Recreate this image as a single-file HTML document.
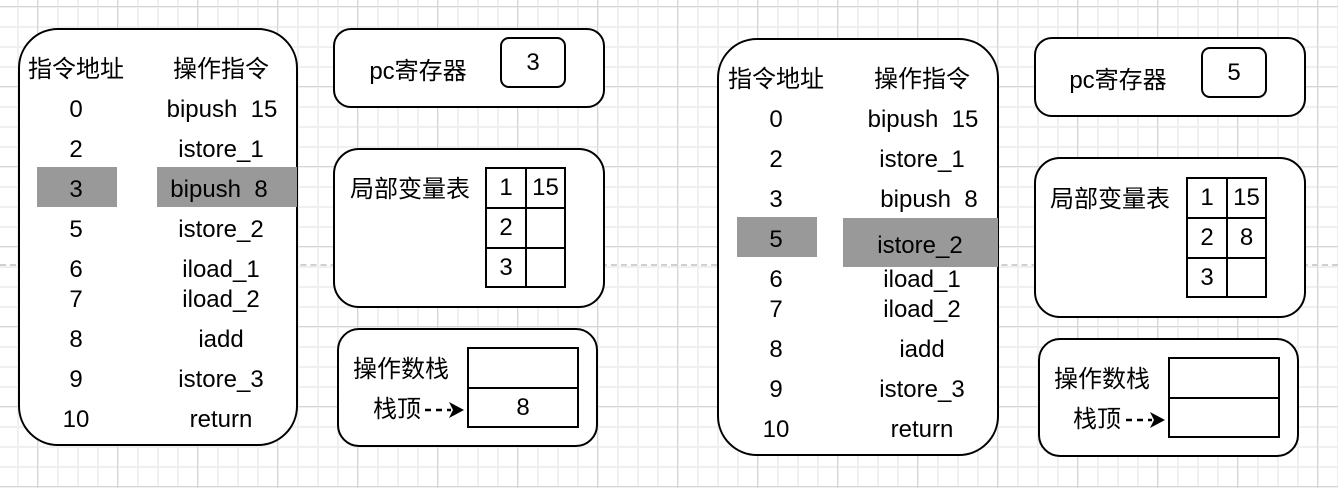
<!DOCTYPE html>
<html><head><meta charset="utf-8"><style>
body{margin:0;width:1338px;height:488px;overflow:hidden;background:#fff;
background-image:linear-gradient(#d6d6d6 1px,transparent 1px),linear-gradient(90deg,#d6d6d6 1px,transparent 1px),linear-gradient(#f0f0f0 2px,transparent 2px),linear-gradient(90deg,#f0f0f0 2px,transparent 2px);
background-size:80px 80px,80px 80px,20px 20px,20px 20px;background-position:0 6px,37px 0,0 6px,17px 0;position:relative;
font-family:"Liberation Sans","Noto Sans CJK SC",sans-serif;color:#000}
.a{position:absolute}
.box{position:absolute;border:2px solid #000;border-radius:26px;background:#fff;box-sizing:border-box}
.t{position:absolute;font-size:24px;line-height:28px;white-space:pre;transform:translate(-50%,-50%)}
.hl{position:absolute;background:#999}
.c{position:absolute;border:2px solid #000;box-sizing:border-box;font-size:24px;display:flex;align-items:center;justify-content:center}
.dash{position:absolute;left:0;top:264px;width:1338px;border-top:2px dashed #d0d0d0}
</style></head><body>
<div class="dash"></div>

<!-- LEFT -->
<div class="box" style="left:18px;top:28px;width:280px;height:418px;border-radius:40px"></div>
<div class="hl" style="left:37px;top:167px;width:80px;height:40px"></div>
<div class="hl" style="left:157px;top:167px;width:140px;height:40px"></div>
<div class="t" style="left:76px;top:70px">指令地址</div>
<div class="t" style="left:221px;top:70px">操作指令</div>
<div class="t" style="left:76px;top:110px">0</div><div class="t" style="left:222px;top:110px">bipush  15</div>
<div class="t" style="left:76px;top:150px">2</div><div class="t" style="left:221px;top:150px">istore_1</div>
<div class="t" style="left:76px;top:190px">3</div><div class="t" style="left:219px;top:190px">bipush  8</div>
<div class="t" style="left:76px;top:230px">5</div><div class="t" style="left:221px;top:230px">istore_2</div>
<div class="t" style="left:76px;top:270px">6</div><div class="t" style="left:221px;top:270px">iload_1</div>
<div class="t" style="left:76px;top:300px">7</div><div class="t" style="left:221px;top:300px">iload_2</div>
<div class="t" style="left:76px;top:340px">8</div><div class="t" style="left:221px;top:340px">iadd</div>
<div class="t" style="left:76px;top:380px">9</div><div class="t" style="left:221px;top:380px">istore_3</div>
<div class="t" style="left:76px;top:420px">10</div><div class="t" style="left:221px;top:420px">return</div>

<div class="box" style="left:333px;top:28px;width:272px;height:80px;border-radius:18px"></div>
<div class="t" style="left:418px;top:72px">pc寄存器</div>
<div class="c" style="left:500px;top:37px;width:66px;height:51px;border-radius:9px">3</div>

<div class="box" style="left:333px;top:148px;width:272px;height:160px"></div>
<div class="t" style="left:410px;top:190px">局部变量表</div>
<div class="c" style="left:485px;top:167px;width:42px;height:42px">1</div>
<div class="c" style="left:525px;top:167px;width:41px;height:42px">15</div>
<div class="c" style="left:485px;top:207px;width:42px;height:42px">2</div>
<div class="c" style="left:525px;top:207px;width:41px;height:42px"></div>
<div class="c" style="left:485px;top:247px;width:42px;height:41px">3</div>
<div class="c" style="left:525px;top:247px;width:41px;height:41px"></div>

<div class="box" style="left:337px;top:328px;width:261px;height:119px;border-radius:22px"></div>
<div class="t" style="left:401px;top:370px">操作数栈</div>
<div class="t" style="left:397px;top:410px">栈顶</div>
<svg class="a" style="left:423px;top:400px" width="44" height="20"><line x1="2" y1="10" x2="28" y2="10" stroke="#000" stroke-width="2.5" stroke-dasharray="6 5"/><path d="M26 2 L41 10 L26 18 L30 10Z" fill="#000"/></svg>
<div class="c" style="left:467px;top:347px;width:112px;height:42px"></div>
<div class="c" style="left:467px;top:387px;width:112px;height:41px">8</div>

<!-- RIGHT -->
<div class="box" style="left:717px;top:38px;width:282px;height:418px;border-radius:40px"></div>
<div class="hl" style="left:737px;top:217px;width:80px;height:40px"></div>
<div class="hl" style="left:843px;top:218px;width:155px;height:49px"></div>
<div class="t" style="left:776px;top:80px">指令地址</div>
<div class="t" style="left:922px;top:80px">操作指令</div>
<div class="t" style="left:776px;top:120px">0</div><div class="t" style="left:923px;top:120px">bipush  15</div>
<div class="t" style="left:776px;top:160px">2</div><div class="t" style="left:922px;top:160px">istore_1</div>
<div class="t" style="left:776px;top:200px">3</div><div class="t" style="left:929px;top:200px">bipush  8</div>
<div class="t" style="left:776px;top:240px">5</div><div class="t" style="left:920px;top:246px">istore_2</div>
<div class="t" style="left:776px;top:280px">6</div><div class="t" style="left:922px;top:280px">iload_1</div>
<div class="t" style="left:776px;top:310px">7</div><div class="t" style="left:922px;top:310px">iload_2</div>
<div class="t" style="left:776px;top:350px">8</div><div class="t" style="left:922px;top:350px">iadd</div>
<div class="t" style="left:776px;top:390px">9</div><div class="t" style="left:922px;top:390px">istore_3</div>
<div class="t" style="left:776px;top:430px">10</div><div class="t" style="left:922px;top:430px">return</div>

<div class="box" style="left:1034px;top:37px;width:272px;height:80px;border-radius:18px"></div>
<div class="t" style="left:1118px;top:81px">pc寄存器</div>
<div class="c" style="left:1201px;top:47px;width:66px;height:51px;border-radius:9px">5</div>

<div class="box" style="left:1034px;top:157px;width:272px;height:161px"></div>
<div class="t" style="left:1110px;top:200px">局部变量表</div>
<div class="c" style="left:1186px;top:177px;width:42px;height:42px">1</div>
<div class="c" style="left:1226px;top:177px;width:41px;height:42px">15</div>
<div class="c" style="left:1186px;top:217px;width:42px;height:42px">2</div>
<div class="c" style="left:1226px;top:217px;width:41px;height:42px">8</div>
<div class="c" style="left:1186px;top:257px;width:42px;height:41px">3</div>
<div class="c" style="left:1226px;top:257px;width:41px;height:41px"></div>

<div class="box" style="left:1038px;top:338px;width:261px;height:119px;border-radius:22px"></div>
<div class="t" style="left:1102px;top:380px">操作数栈</div>
<div class="t" style="left:1097px;top:420px">栈顶</div>
<svg class="a" style="left:1124px;top:410px" width="44" height="20"><line x1="2" y1="10" x2="28" y2="10" stroke="#000" stroke-width="2.5" stroke-dasharray="6 5"/><path d="M26 2 L41 10 L26 18 L30 10Z" fill="#000"/></svg>
<div class="c" style="left:1168px;top:357px;width:112px;height:42px"></div>
<div class="c" style="left:1168px;top:397px;width:112px;height:41px"></div>
</body></html>
